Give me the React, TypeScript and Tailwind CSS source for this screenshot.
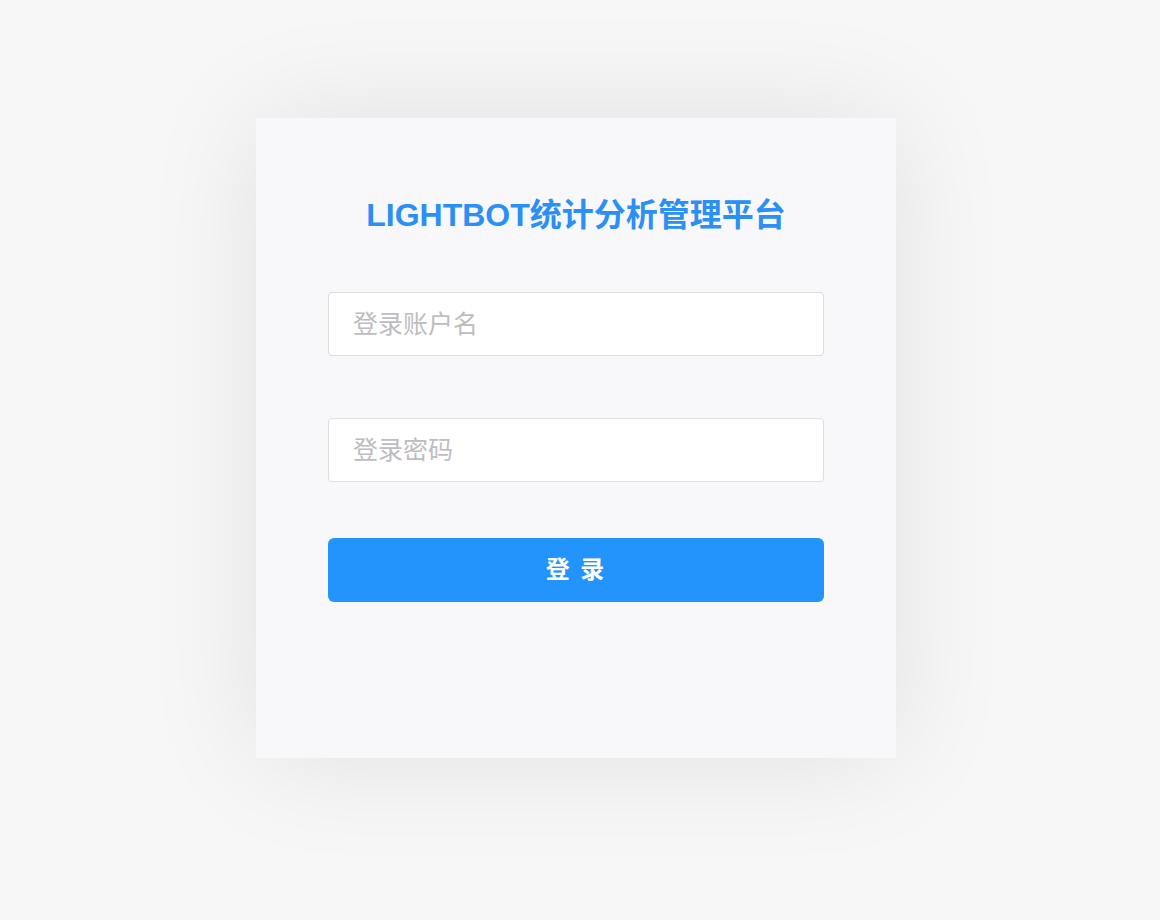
import { useState } from "react";

const App = () => {
  const [user, setUser] = useState("");
  const [pwd, setPwd] = useState("");

  return (
    <div
      className="min-h-[920px] w-full bg-[#f7f7f8] pt-[118px] pl-[256px]"
      style={{ fontFamily: '"Liberation Sans", "Noto Sans CJK SC", sans-serif' }}
    >
      <div className="flex h-[640px] w-[640px] flex-col items-center bg-[#f8f7f9] px-[72px] pt-[76px] shadow-[0_0_110px_rgba(0,0,0,0.09)]">
        <h1 className="text-[32px] font-bold leading-[42px] text-[#2b8ff3]">
          LIGHTBOT统计分析管理平台
        </h1>
        <input
          value={user}
          onChange={(e) => setUser(e.target.value)}
          placeholder="登录账户名"
          className="mt-[56px] h-[64px] w-full rounded border border-[#dedede] bg-white px-6 text-[25px] text-[#606266] outline-none placeholder:text-[#bdbdc0]"
        />
        <input
          type="password"
          value={pwd}
          onChange={(e) => setPwd(e.target.value)}
          placeholder="登录密码"
          className="mt-[62px] h-[64px] w-full rounded border border-[#dedede] bg-white px-6 text-[25px] text-[#606266] outline-none placeholder:text-[#bdbdc0]"
        />
        <button
          type="button"
          className="mt-[56px] h-[64px] w-full rounded-md bg-[#2394fc] text-[24px] font-bold tracking-[2px] text-white"
        >
          登 录
        </button>
      </div>
    </div>
  );
};

export default App;
